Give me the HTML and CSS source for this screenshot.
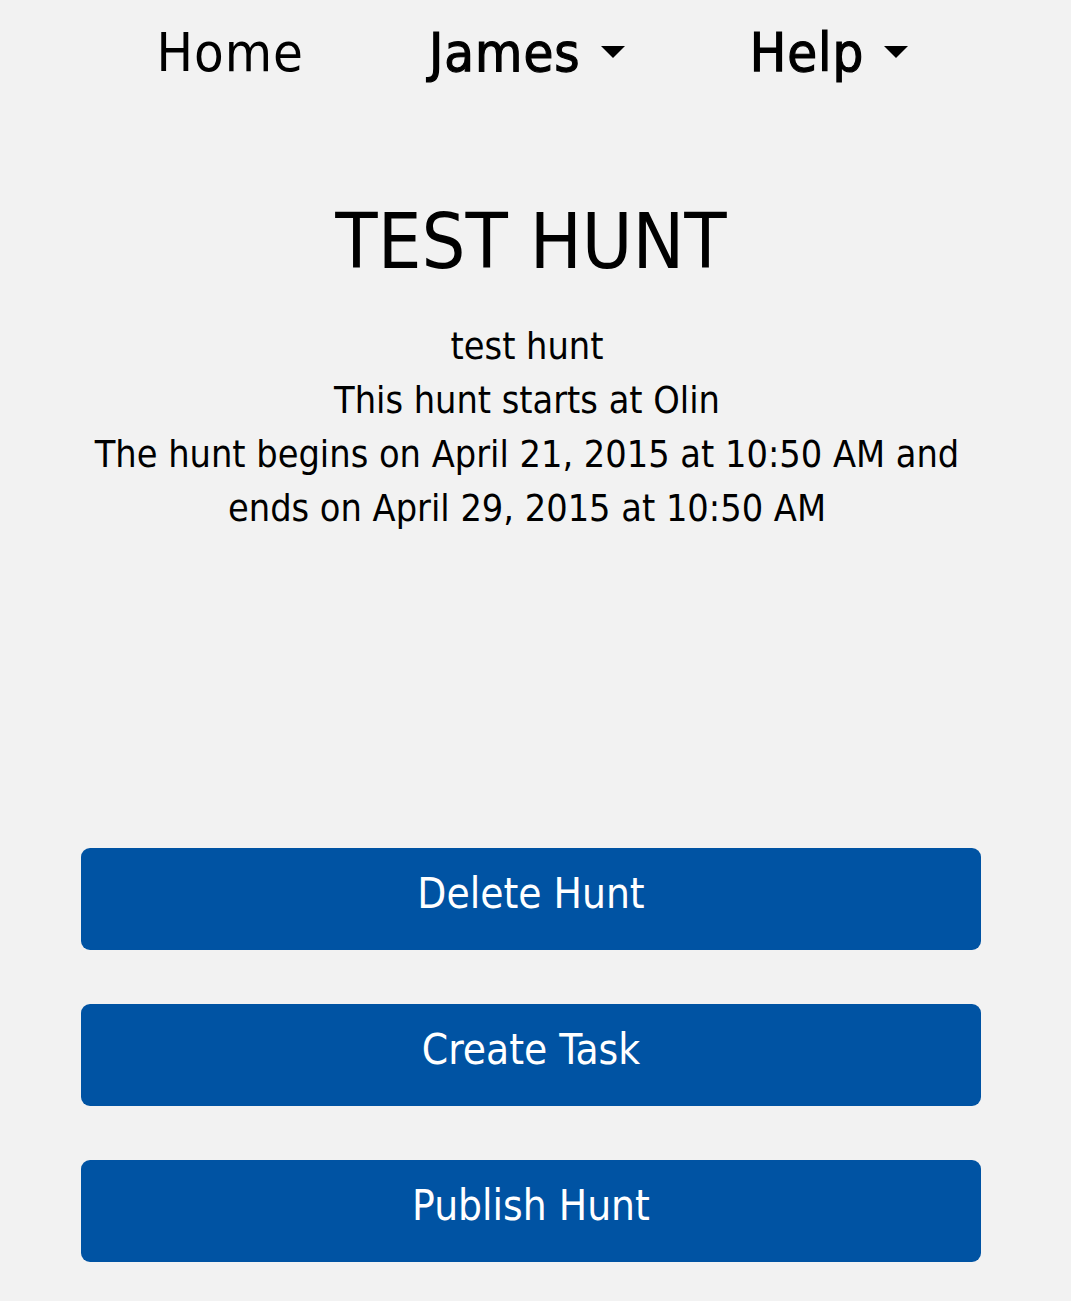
FILE: index.html
```html
<!DOCTYPE html>
<html>
<head>
<meta charset="utf-8">
<link rel="stylesheet" href="styles.css">
</head>
<body>
<nav class="nav">
  <a class="nav-link">Home</a>
  <a class="nav-link nav-drop">James <span class="caret"></span></a>
  <a class="nav-link nav-drop">Help <span class="caret"></span></a>
</nav>
<main class="content">
  <h1 class="title">TEST HUNT</h1>
  <div class="info">
    <p>test hunt</p>
    <p>This hunt starts at Olin</p>
    <p>The hunt begins on April 21, 2015 at 10:50 AM and ends on April 29, 2015 at 10:50 AM</p>
  </div>
  <div class="actions">
    <button class="btn">Delete Hunt</button>
    <button class="btn">Create Task</button>
    <button class="btn">Publish Hunt</button>
  </div>
</main>
</body>
</html>
```
FILE: styles.css
```css
html, body {
  margin: 0;
  padding: 0;
  background: #f2f2f2;
}
body {
  font-family: "DejaVu Sans", sans-serif;
  font-stretch: condensed;
  color: #000;
}
.nav {
  display: flex;
  justify-content: center;
  align-items: center;
  gap: 125px;
  height: 104px;
  padding-right: 6px;
}
.nav-link {
  font-size: 54px;
  letter-spacing: 1px;
  font-weight: 400;
  color: #000;
  display: flex;
  align-items: center;
}
.nav-drop {
  -webkit-text-stroke: 1.2px #000;
}
.caret {
  display: inline-block;
  width: 0;
  height: 0;
  margin-left: 20px;
  border-left: 12px solid transparent;
  border-right: 12px solid transparent;
  border-top: 12px solid #000;
}
.content {
  width: 900px;
  margin-left: 81px;
  text-align: center;
}
.title {
  margin: 90px 0 0;
  font-size: 77px;
  font-weight: 400;
  line-height: 96px;
}
.info {
  margin-top: 29px;
  padding-right: 8px;
  font-size: 37.5px;
  line-height: 54px;
}
.info p {
  margin: 0;
}
.actions {
  margin-top: 313px;
  display: flex;
  flex-direction: column;
  gap: 54px;
}
.btn {
  display: block;
  width: 100%;
  height: 102px;
  border: none;
  border-radius: 9px;
  background: #0053a3;
  color: #fff;
  font-family: inherit;
  font-stretch: condensed;
  font-size: 42px;
  padding: 0 0 12px;
}
```
